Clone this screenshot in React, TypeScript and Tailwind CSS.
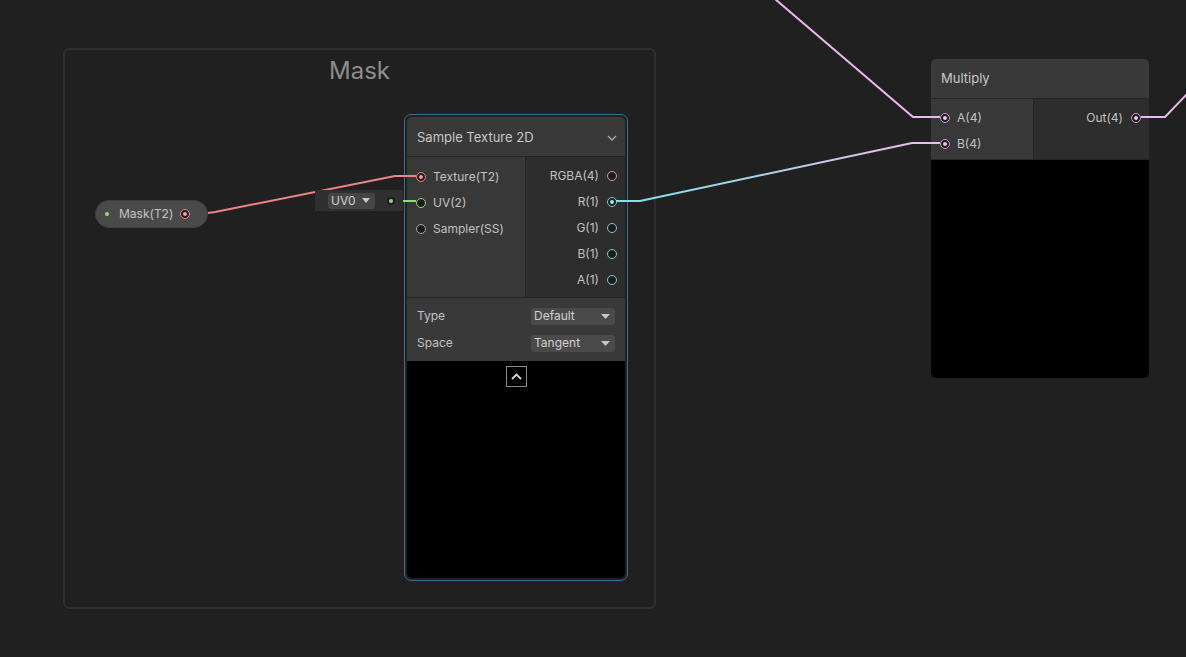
import React from 'react';

const font = { fontFamily: 'Inter, "Noto Sans", sans-serif' };

type PortKind = 'red' | 'green' | 'gray' | 'pink' | 'cyan';

const ringColor: Record<PortKind, string> = {
  red: 'border-[#e98989]',
  green: 'border-[#8fdc7a]',
  gray: 'border-[#a9a9a9]',
  pink: 'border-[#c99ac9]',
  cyan: 'border-[#7fcfd2]',
};

const dotColor: Record<PortKind, string> = {
  red: 'bg-[#f0a0a0]',
  green: 'bg-[#9be888]',
  gray: 'bg-[#bbbbbb]',
  pink: 'bg-[#f0c6f0]',
  cyan: 'bg-[#8ff0f4]',
};

function Port({ kind, connected = false }: { kind: PortKind; connected?: boolean }) {
  return (
    <span
      className={`w-[10px] h-[10px] shrink-0 rounded-full border-[1.5px] ${ringColor[kind]} bg-[#1c1c1c] flex items-center justify-center`}
    >
      {connected && <span className={`w-[4px] h-[4px] rounded-full ${dotColor[kind]}`} />}
    </span>
  );
}

function InRow({ label, kind, connected }: { label: string; kind: PortKind; connected?: boolean }) {
  return (
    <div className="h-[26px] flex items-center gap-[7px] pl-[9px]">
      <Port kind={kind} connected={connected} />
      <span className="text-[12px] text-[#c2c2c2]">{label}</span>
    </div>
  );
}

function OutRow({ label, kind, connected }: { label: string; kind: PortKind; connected?: boolean }) {
  return (
    <div className="h-[26px] flex items-center justify-end gap-[8px] pr-[8px]">
      <span className="text-[12px] text-[#c2c2c2]">{label}</span>
      <Port kind={kind} connected={connected} />
    </div>
  );
}

function Dropdown({ value, width }: { value: string; width: string }) {
  return (
    <div className={`${width} h-[17px] rounded-[3px] bg-[#4a4a4a] flex items-center justify-between pl-[3px] pr-[5px]`}>
      <span className="text-[12px] text-[#d0d0d0] leading-none">{value}</span>
      <svg width="9" height="5" viewBox="0 0 9 5">
        <path d="M0 0 L9 0 L4.5 5 Z" fill="#c8c8c8" />
      </svg>
    </div>
  );
}

function SampleTextureNode() {
  return (
    <div className="absolute left-[404px] top-[114px] w-[224px] h-[467px] rounded-[7px] border border-[#3a6f88] p-[2px]">
      <div className="w-full h-full rounded-[5px] overflow-hidden flex flex-col">
        <div className="h-[40px] shrink-0 bg-[#393939] flex items-center justify-between pl-[10px] pr-[8px] pt-[2px] border-b border-[#262626]">
          <span className="text-[13px] text-[#c8c8c8]">Sample Texture 2D</span>
          <svg width="10" height="6" viewBox="0 0 10 6">
            <path d="M1 1 L5 5 L9 1" stroke="#a8a8a8" strokeWidth="1.3" fill="none" />
          </svg>
        </div>
        <div className="h-[140px] shrink-0 flex">
          <div className="w-[118px] bg-[#383838] pt-[7px]">
            <InRow label="Texture(T2)" kind="red" connected />
            <InRow label="UV(2)" kind="green" />
            <InRow label="Sampler(SS)" kind="gray" />
          </div>
          <div className="flex-1 bg-[#2d2d2d] border-l border-[#262626] pt-[6px]">
            <OutRow label="RGBA(4)" kind="pink" />
            <OutRow label="R(1)" kind="cyan" connected />
            <OutRow label="G(1)" kind="cyan" />
            <OutRow label="B(1)" kind="cyan" />
            <OutRow label="A(1)" kind="cyan" />
          </div>
        </div>
        <div className="h-[64px] shrink-0 bg-[#393939] border-t border-[#262626] px-[10px] pt-[9px] flex flex-col gap-[9px]">
          <div className="flex items-center justify-between">
            <span className="text-[12px] text-[#c2c2c2]">Type</span>
            <Dropdown value="Default" width="w-[84px]" />
          </div>
          <div className="flex items-center justify-between">
            <span className="text-[12px] text-[#c2c2c2]">Space</span>
            <Dropdown value="Tangent" width="w-[84px]" />
          </div>
        </div>
        <div className="flex-1 bg-black flex justify-center pt-[5px]">
          <div className="w-[21px] h-[21px] border border-[#8a8a8a] flex items-center justify-center">
            <svg width="11" height="7" viewBox="0 0 11 7">
              <path d="M1 6 L5.5 1.5 L10 6" stroke="#d8d8d8" strokeWidth="1.8" fill="none" />
            </svg>
          </div>
        </div>
      </div>
    </div>
  );
}

function MultiplyNode() {
  return (
    <div className="absolute left-[931px] top-[59px] w-[218px] h-[319px] rounded-[5px] overflow-hidden flex flex-col">
      <div className="h-[40px] shrink-0 bg-[#393939] flex items-center pl-[10px] border-b border-[#262626]">
        <span className="text-[13px] text-[#c8c8c8]">Multiply</span>
      </div>
      <div className="h-[61px] shrink-0 flex border-b border-[#262626]">
        <div className="w-[102px] bg-[#383838] pt-[6px]">
          <InRow label="A(4)" kind="pink" connected />
          <InRow label="B(4)" kind="pink" connected />
        </div>
        <div className="flex-1 bg-[#2d2d2d] border-l border-[#262626] pt-[6px]">
          <OutRow label="Out(4)" kind="pink" connected />
        </div>
      </div>
      <div className="flex-1 bg-black" />
    </div>
  );
}

function MaskProperty() {
  return (
    <div className="absolute left-[95px] top-[200px] w-[113px] h-[28px] rounded-full bg-[#4a4a4a] border border-[#3f3f3f] flex items-center pl-[9px] pr-[17px]">
      <span className="w-[4px] h-[4px] rounded-full bg-[#8fdc7a]" />
      <span className="ml-[10px] text-[12px] text-[#c4c4c4]">Mask(T2)</span>
      <span className="ml-auto">
        <Port kind="red" connected />
      </span>
    </div>
  );
}

function UvInline() {
  return (
    <div className="absolute left-[315px] top-[190px] w-[88px] h-[21px] bg-[#2f2f2f] flex items-center pl-[13px]">
      <div className="w-[47px] h-[16px] rounded-[3px] bg-[#454545] flex items-center justify-between pl-[3px] pr-[5px]">
        <span className="text-[12px] text-[#d0d0d0] leading-none">UV0</span>
        <svg width="8" height="5" viewBox="0 0 8 5">
          <path d="M0 0 L8 0 L4 5 Z" fill="#c8c8c8" />
        </svg>
      </div>
      <span className="ml-[12px] w-[8px] h-[8px] rounded-full bg-[#1e1e1e] flex items-center justify-center">
        <span className="w-[4px] h-[4px] rounded-full bg-[#8fdc7a]" />
      </span>
    </div>
  );
}

function Wires() {
  return (
    <svg className="absolute inset-0 pointer-events-none" width="1186" height="657">
      <defs>
        <linearGradient id="rg" gradientUnits="userSpaceOnUse" x1="640" y1="0" x2="912" y2="0">
          <stop offset="0" stopColor="#7fe3ea" />
          <stop offset="1" stopColor="#ebbdeb" />
        </linearGradient>
      </defs>
      <path d="M208 213 L215 212 L395 176 L416 176" stroke="#ec8585" strokeWidth="2" fill="none" />
      <path d="M395 201 L416 201" stroke="#8fdc7a" strokeWidth="2" fill="none" />
      <path d="M616 201 L640 201 L912 143 L940 143" stroke="url(#rg)" strokeWidth="2" fill="none" />
      <path d="M775 -1 L913 117 L940 117" stroke="#ebb9eb" strokeWidth="2" fill="none" />
      <path d="M1141 117 L1165 117 L1190 91" stroke="#ebb9eb" strokeWidth="2" fill="none" />
    </svg>
  );
}

export default function App() {
  return (
    <div className="relative w-[1186px] h-[657px] bg-[#202020] overflow-hidden" style={font}>
      <div className="absolute left-[63px] top-[48px] w-[593px] h-[561px] rounded-[6px] border-2 border-[#2f2f2f] flex justify-center">
        <span className="mt-[3px] text-[24px] text-[#8d8d8d]">Mask</span>
      </div>
      <MaskProperty />
      <SampleTextureNode />
      <MultiplyNode />
      <Wires />
      <UvInline />
    </div>
  );
}
